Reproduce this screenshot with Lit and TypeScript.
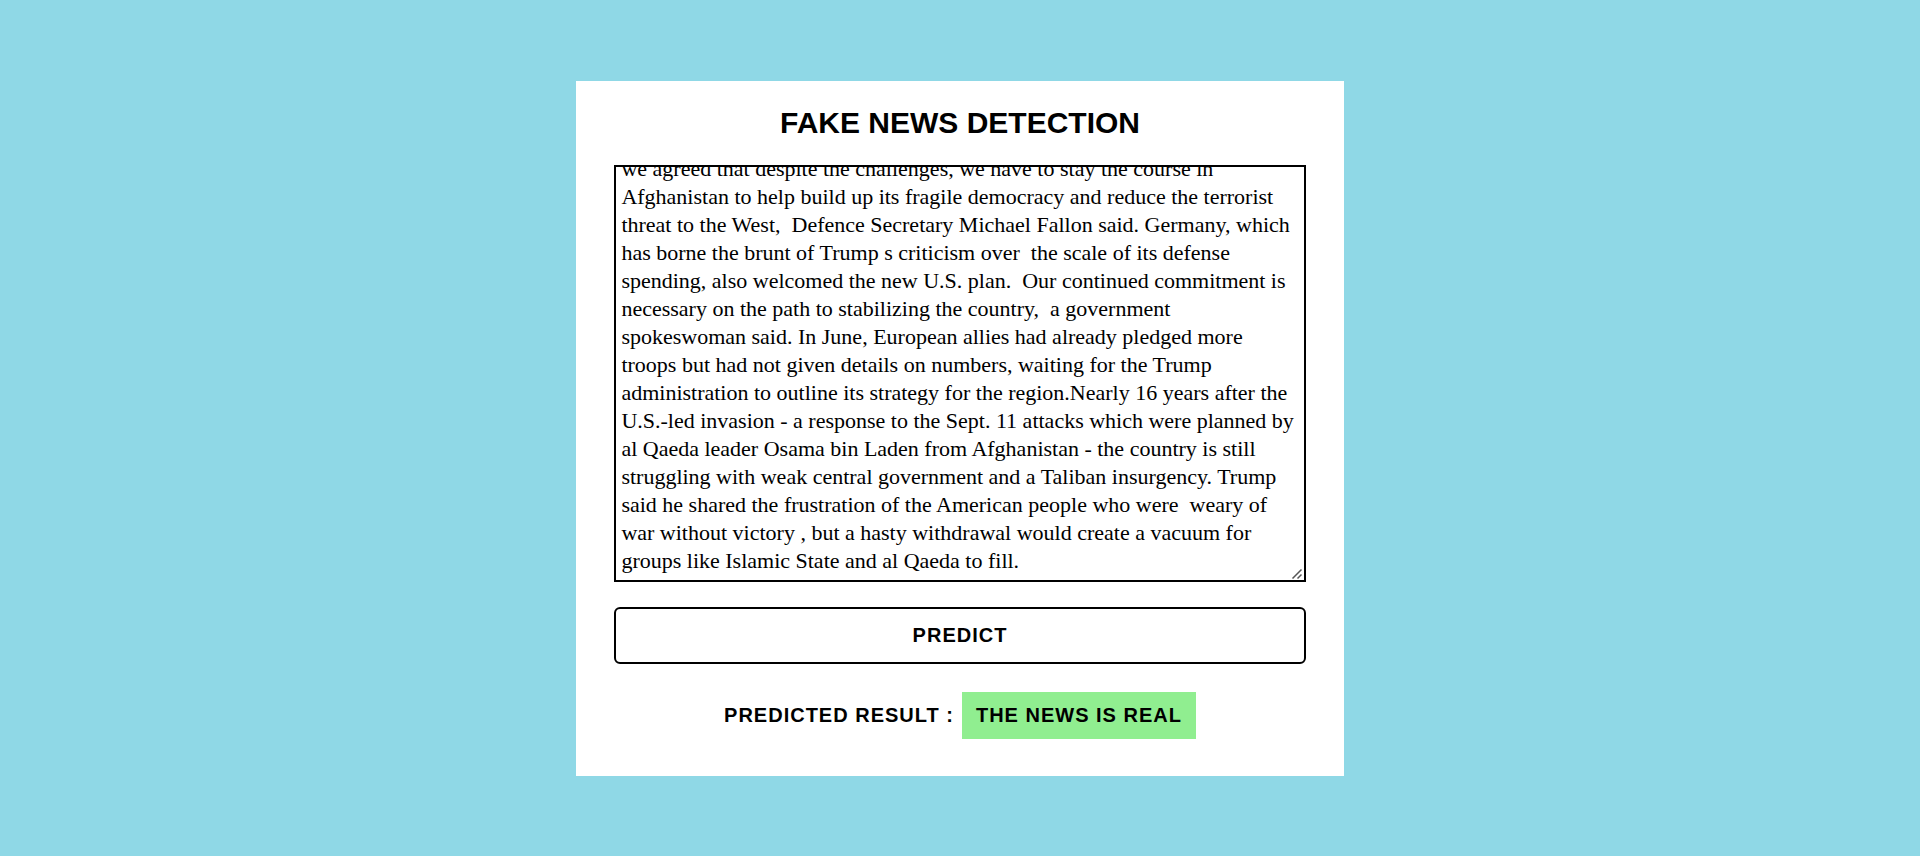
import { LitElement, html, css } from "lit";
import { customElement, query, state } from "lit/decorators.js";

const ARTICLE = [
  "we agreed that despite the challenges, we have to stay the course in",
  "Afghanistan to help build up its fragile democracy and reduce the terrorist",
  "threat to the West,  Defence Secretary Michael Fallon said. Germany, which",
  "has borne the brunt of Trump s criticism over  the scale of its defense",
  "spending, also welcomed the new U.S. plan.  Our continued commitment is",
  "necessary on the path to stabilizing the country,  a government",
  "spokeswoman said. In June, European allies had already pledged more",
  "troops but had not given details on numbers, waiting for the Trump",
  "administration to outline its strategy for the region.Nearly 16 years after the",
  "U.S.-led invasion - a response to the Sept. 11 attacks which were planned by",
  "al Qaeda leader Osama bin Laden from Afghanistan - the country is still",
  "struggling with weak central government and a Taliban insurgency. Trump",
  "said he shared the frustration of the American people who were  weary of",
  "war without victory , but a hasty withdrawal would create a vacuum for",
  "groups like Islamic State and al Qaeda to fill.",
].join("\n");

@customElement("app-root")
export class AppRoot extends LitElement {
  static styles = css`
    :host {
      display: flex;
      align-items: center;
      justify-content: center;
      min-height: 100vh;
      background: #8fd8e6;
      color: #000;
      font-family: Arial, "Liberation Sans", sans-serif;
    }
    .card {
      box-sizing: border-box;
      width: 40%;
      padding: 24px 2% 37px;
      background: #fff;
      text-align: center;
    }
    .title {
      margin: 0 0 24px;
      font-size: 30px;
      line-height: 36px;
      font-weight: 700;
    }
    .field {
      position: relative;
      margin: 0 0 25px;
    }
    .news {
      display: block;
      box-sizing: border-box;
      width: 100%;
      height: 417px;
      margin: 0;
      padding: 5px;
      border: 2px solid #000;
      border-radius: 0;
      outline: none;
      background: #fff;
      color: #000;
      font-family: Georgia, "Liberation Serif", serif;
      font-size: 22px;
      line-height: 28px;
      resize: vertical;
      scrollbar-width: none;
    }
    /* Resize grip drawn over the corner of the text box */
    .grip {
      position: absolute;
      right: 2px;
      bottom: 2px;
      width: 14px;
      height: 14px;
      background: #fff;
      pointer-events: none;
    }
    .predict {
      display: block;
      box-sizing: border-box;
      width: 100%;
      margin: 0 0 28px;
      padding: 15px;
      border: 2px solid #000;
      border-radius: 6px;
      background: #fff;
      color: #000;
      font-family: inherit;
      font-size: 20px;
      line-height: 23px;
      font-weight: 700;
      letter-spacing: 1px;
      cursor: pointer;
    }
    .result {
      display: flex;
      flex-wrap: wrap;
      align-items: center;
      justify-content: center;
      gap: 8px;
      margin: 0;
      font-size: 20px;
      line-height: 23px;
      font-weight: 700;
      letter-spacing: 1px;
    }
    .verdict {
      padding: 12px 14px;
      background: #90ee90;
    }
  `;

  @state() private text = ARTICLE;
  @state() private verdict = "THE NEWS IS REAL";
  @query(".news") private news!: HTMLTextAreaElement;

  protected firstUpdated() {
    this.news.scrollTop = this.news.scrollHeight;
  }

  private onInput(event: Event) {
    this.text = (event.target as HTMLTextAreaElement).value;
  }

  render() {
    return html`
      <main class="card">
        <h1 class="title" id="title">FAKE NEWS DETECTION</h1>
        <form @submit=${(e: Event) => e.preventDefault()}>
          <div class="field">
            <textarea
              class="news"
              aria-labelledby="title"
              spellcheck="false"
              .value=${this.text}
              @input=${this.onInput}
            ></textarea>
            <svg class="grip" viewBox="0 0 14 14" aria-hidden="true">
              <path
                d="M2.5 12.5 L11.5 3.5 M7.5 12.5 L11.5 8.5"
                fill="none"
                stroke="#555"
                stroke-width="1.5"
              />
            </svg>
          </div>
          <button class="predict" type="submit">PREDICT</button>
        </form>
        <p class="result">
          <span>PREDICTED RESULT :</span>
          <output class="verdict">${this.verdict}</output>
        </p>
      </main>
    `;
  }
}
